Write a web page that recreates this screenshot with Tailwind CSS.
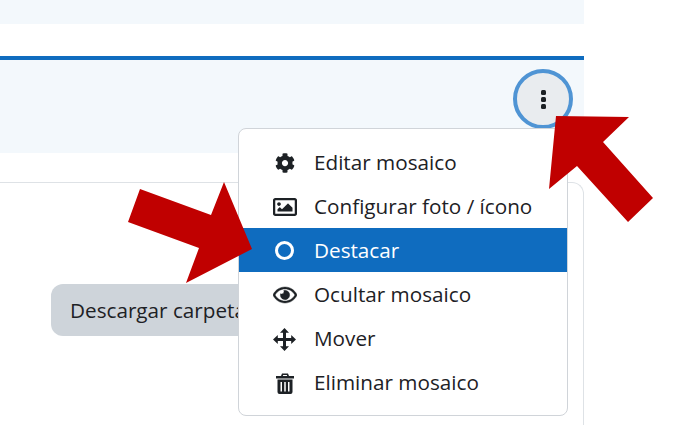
<!DOCTYPE html>
<html lang="es">
  <head>
    <meta charset="UTF-8" />
    <title>Mosaico</title>
    <script src="https://cdn.jsdelivr.net/npm/@tailwindcss/browser@4"></script>
  </head>
  <body class="relative h-[425px] w-[693px] overflow-hidden bg-white font-['Open_Sans',sans-serif] text-[20.7px] text-[#1d2125]">
    <div class="w-[584px]">
      <div class="h-6 bg-[#f3f8fc]"></div>
      <div class="mt-8 flex h-[97px] items-start justify-end border-t-4 border-[#0f6cbf] bg-[#f3f8fc] pr-[11px] pt-[9px]">
        <!-- menu toggle -->
        <button class="flex h-[60px] w-[60px] flex-col items-center justify-center gap-[2px] rounded-full border-4 border-[#4f94d4] bg-[#e9ecef]">
          <span class="h-[5px] w-[5px] rounded-[1.5px] bg-[#1d2125]"></span>
          <span class="h-[5px] w-[5px] rounded-[1.5px] bg-[#1d2125]"></span>
          <span class="h-[5px] w-[5px] rounded-[1.5px] bg-[#1d2125]"></span>
        </button>
      </div>
      <div class="mt-[29px] h-[243px] rounded-tr-xl border-r border-t border-[#dee2e6] pl-[51px] pt-[101px]">
        <button class="h-[52px] w-[300px] rounded-xl bg-[#ced4da] pl-[19px] pt-[2px] text-left">Descargar carpeta</button>
      </div>
    </div>

    <div class="absolute left-[238px] top-[128px] w-[330px] rounded-lg border border-[#d0d4d9] bg-white py-[11px]">
      <div class="flex h-11 items-center pt-[2px]">
        <span class="flex w-[75px] justify-center pl-[25px] pr-[9px]">
          <svg class="h-5 w-5" viewBox="0 0 512 512" fill="currentColor"><path d="M487.4 315.7l-42.6-24.6c4.3-23.2 4.3-47 0-70.2l42.6-24.6c4.9-2.8 7.1-8.6 5.5-14-11.1-35.6-30-67.8-54.7-94.6-3.8-4.1-10-5.1-14.8-2.3L380.8 110c-17.9-15.4-38.5-27.3-60.8-35.1V25.8c0-5.6-3.9-10.5-9.4-11.7-36.7-8.2-74.3-7.8-109.2 0-5.5 1.2-9.4 6.1-9.4 11.7V75c-22.2 7.9-42.8 19.8-60.8 35.1L88.7 85.5c-4.9-2.8-11-1.9-14.8 2.3-24.7 26.7-43.6 58.9-54.7 94.6-1.7 5.4.6 11.2 5.5 14L67.3 221c-4.3 23.2-4.3 47 0 70.2l-42.6 24.6c-4.9 2.8-7.1 8.6-5.5 14 11.1 35.6 30 67.8 54.7 94.6 3.8 4.1 10 5.1 14.8 2.3l42.6-24.6c17.9 15.4 38.5 27.3 60.8 35.1v49.2c0 5.6 3.9 10.5 9.4 11.7 36.7 8.2 74.3 7.8 109.2 0 5.5-1.2 9.4-6.1 9.4-11.7v-49.2c22.2-7.9 42.8-19.8 60.8-35.1l42.6 24.6c4.9 2.8 11 1.9 14.8-2.3 24.7-26.7 43.6-58.9 54.7-94.6 1.5-5.5-.7-11.3-5.6-14.1zM256 336c-44.1 0-80-35.9-80-80s35.9-80 80-80 80 35.9 80 80-35.9 80-80 80z"/></svg>
        </span>
        <span>Editar mosaico</span>
      </div>
      <div class="flex h-11 items-center pt-[2px]">
        <span class="flex w-[75px] justify-center pl-[25px] pr-[9px]">
          <svg class="h-6 w-6 shrink-0" viewBox="0 0 512 512" fill="currentColor"><path d="M464 64H48C21.49 64 0 85.49 0 112v288c0 26.51 21.49 48 48 48h416c26.51 0 48-21.49 48-48V112c0-26.51-21.49-48-48-48zm-6 336H54a6 6 0 0 1-6-6V118a6 6 0 0 1 6-6h404a6 6 0 0 1 6 6v276a6 6 0 0 1-6 6zM128 152c-22.091 0-40 17.909-40 40s17.909 40 40 40 40-17.909 40-40-17.909-40-40-40zM96 352h320v-80l-87.515-87.515c-4.686-4.686-12.284-4.686-16.971 0L192 304l-39.515-39.515c-4.686-4.686-12.284-4.686-16.971 0L96 304v48z"/></svg>
        </span>
        <span>Configurar foto / ícono</span>
      </div>
      <div class="flex h-11 items-center bg-[#0f6cbf] pt-[2px] text-white">
        <span class="flex w-[75px] justify-center pl-[25px] pr-[9px]">
          <svg class="h-[19px] w-[19px] -translate-y-px" viewBox="0 0 19 19" fill="none" stroke="currentColor" stroke-width="3"><circle cx="9.5" cy="9.5" r="8"/></svg>
        </span>
        <span>Destacar</span>
      </div>
      <div class="flex h-11 items-center pt-[2px]">
        <span class="flex w-[75px] justify-center pl-[25px] pr-[9px]">
          <svg class="h-6 w-6 shrink-0" viewBox="0 0 576 512" fill="currentColor" stroke="currentColor" stroke-width="10"><path d="M288 144a110.94 110.94 0 0 0-31.24 5 55.4 55.4 0 0 1 7.24 27 56 56 0 0 1-56 56 55.4 55.4 0 0 1-27-7.24A111.71 111.71 0 1 0 288 144zm284.52 97.4C518.29 135.59 410.93 64 288 64S57.68 135.64 3.48 241.41a32.35 32.35 0 0 0 0 29.19C57.71 376.41 165.07 448 288 448s230.32-71.64 284.52-177.41a32.35 32.35 0 0 0 0-29.19zM288 400c-98.65 0-189.09-55-237.93-144C98.91 167 189.34 112 288 112s189.09 55 237.93 144C477.1 345 386.66 400 288 400z"/></svg>
        </span>
        <span>Ocultar mosaico</span>
      </div>
      <div class="flex h-11 items-center pt-[2px]">
        <span class="flex w-[75px] justify-center pl-[25px] pr-[9px]">
          <svg class="h-[23px] w-[23px] shrink-0" viewBox="0 0 23 23" fill="currentColor"><path d="M11.5 0 16 4.8H13V10H18.2V7L23 11.5 18.2 16V13H13V18.2H16L11.5 23 7 18.2H10V13H4.8V16L0 11.5 4.8 7V10H10V4.8H7Z"/></svg>
        </span>
        <span>Mover</span>
      </div>
      <div class="flex h-11 items-center pt-[2px]">
        <span class="flex w-[75px] justify-center pl-[25px] pr-[9px]">
          <svg class="h-[21px] w-[18px]" viewBox="0 0 18 21" fill="currentColor"><path fill-rule="evenodd" d="M0 3H5L6 .5H12L13 3H18V5.5H0ZM6.8 3H11.2L10.8 2H7.2ZM1.5 6.5H16.5V19A2 2 0 0 1 14.5 21H3.5A2 2 0 0 1 1.5 19ZM4.5 9V18.5H6V9ZM8.25 9V18.5H9.75V9ZM12 9V18.5H13.5V9Z"/></svg>
        </span>
        <span>Eliminar mosaico</span>
      </div>
    </div>

    <!-- red arrows drawn on top of the screenshot -->
    <svg class="absolute inset-0 h-[425px] w-[693px]" viewBox="0 0 693 425" fill="#c00000">
      <polygon points="556,116 629,117 603,142 653,198 628,222 577,166 549,189" />
      <polygon points="140,189 211,215 224,182 252,249 186,283 199,248 128,222" />
    </svg>
  </body>
</html>
